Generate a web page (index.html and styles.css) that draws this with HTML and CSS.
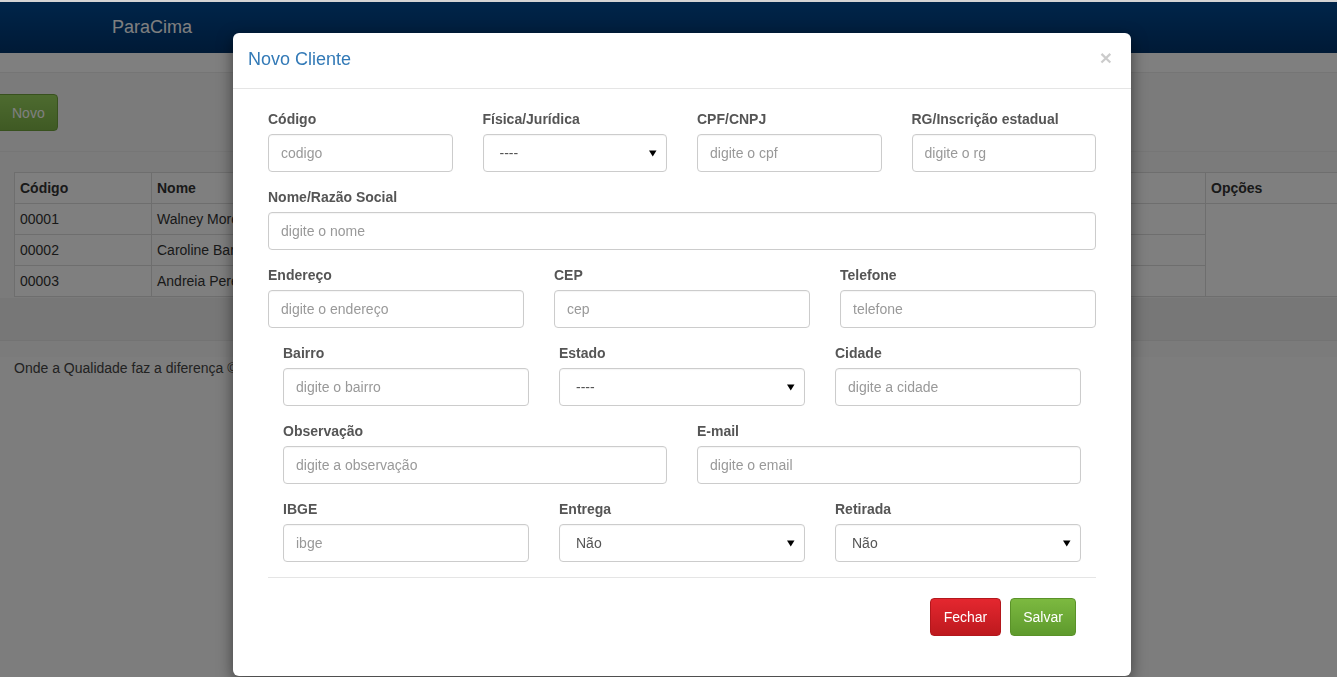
FILE: index.html
```html
<!DOCTYPE html>
<html lang="pt-BR">
<head>
<meta charset="utf-8">
<title>ParaCima - Clientes</title>
<link rel="stylesheet" href="styles.css">
</head>
<body>
<div class="topline"></div>
<header class="navbar">
  <span class="brand">ParaCima</span>
</header>
<div class="subbar"></div>
<main class="page">
  <div class="actions">
    <button class="btn btn-novo">Novo</button>
  </div>
  <table class="grid">
    <thead>
      <tr>
        <th class="c-cod">Código</th>
        <th class="c-nome">Nome</th>
        <th class="c-x">Telefone</th>
        <th class="c-x">Cidade</th>
        <th class="c-opt">Opções</th>
      </tr>
    </thead>
    <tbody>
      <tr><td>00001</td><td>Walney Moreira</td><td></td><td></td><td class="opt" rowspan="3"></td></tr>
      <tr><td>00002</td><td>Caroline Barbosa</td><td></td><td></td></tr>
      <tr><td>00003</td><td>Andreia Pereira</td><td></td><td></td></tr>
    </tbody>
  </table>
  <div class="gap-band"></div>
  <footer class="foot">Onde a Qualidade faz a diferença ©</footer>
</main>

<div class="backdrop"></div>

<div class="modal">
  <div class="modal-header">
    <h4 class="modal-title">Novo Cliente</h4>
    <button class="close" aria-label="Fechar">×</button>
  </div>
  <div class="modal-body">
    <div class="row r4">
      <div class="field"><label>Código</label><input class="ctl" placeholder="codigo"></div>
      <div class="field"><label>Física/Jurídica</label><select class="ctl sel"><option>----</option></select></div>
      <div class="field"><label>CPF/CNPJ</label><input class="ctl" placeholder="digite o cpf"></div>
      <div class="field"><label>RG/Inscrição estadual</label><input class="ctl" placeholder="digite o rg"></div>
    </div>
    <div class="row r1">
      <div class="field"><label>Nome/Razão Social</label><input class="ctl" placeholder="digite o nome"></div>
    </div>
    <div class="row r3">
      <div class="field"><label>Endereço</label><input class="ctl" placeholder="digite o endereço"></div>
      <div class="field"><label>CEP</label><input class="ctl" placeholder="cep"></div>
      <div class="field"><label>Telefone</label><input class="ctl" placeholder="telefone"></div>
    </div>
    <div class="row r3 inset">
      <div class="field"><label>Bairro</label><input class="ctl" placeholder="digite o bairro"></div>
      <div class="field"><label>Estado</label><select class="ctl sel"><option>----</option></select></div>
      <div class="field"><label>Cidade</label><input class="ctl" placeholder="digite a cidade"></div>
    </div>
    <div class="row r2 inset">
      <div class="field"><label>Observação</label><input class="ctl" placeholder="digite a observação"></div>
      <div class="field"><label>E-mail</label><input class="ctl" placeholder="digite o email"></div>
    </div>
    <div class="row r3 inset">
      <div class="field"><label>IBGE</label><input class="ctl" placeholder="ibge"></div>
      <div class="field"><label>Entrega</label><select class="ctl sel"><option>Não</option></select></div>
      <div class="field"><label>Retirada</label><select class="ctl sel"><option>Não</option></select></div>
    </div>
    <hr class="sep">
    <div class="footer-btns">
      <button class="btn btn-danger">Fechar</button>
      <button class="btn btn-success">Salvar</button>
    </div>
  </div>
</div>
</body>
</html>
```
FILE: styles.css
```css
* { box-sizing: border-box; }
html, body { margin: 0; padding: 0; }
body {
  font-family: "Liberation Sans", Arial, sans-serif;
  font-size: 14px;
  color: #333;
  background: #f6f6f6;
  overflow: hidden;
  height: 677px;
}
.topline { height: 2px; background: #d4d4d4; position: relative; z-index: 20; }
.navbar {
  height: 51px;
  background: linear-gradient(#004a94, #00346c);
  display: flex;
  align-items: center;
  padding-left: 112px;
}
.brand { color: #fff; font-size: 18px; }
.subbar { height: 20px; background: #fff; border-bottom: 1px solid #eaeaea; }
.page { padding: 0; }
.actions {
  padding: 21px 0 20px 0;
  border-bottom: 1px solid #ececec;
  margin-bottom: 20px;
}
.btn {
  font-family: "Liberation Sans", Arial, sans-serif;
  font-size: 14px;
  color: #fff;
  border: 1px solid transparent;
  border-radius: 4px;
  height: 38px;
  padding: 0 12px;
  cursor: pointer;
}
.btn-novo {
  margin-left: -4px;
  width: 62px;
  height: 37px;
  padding-left: 15px;
  text-align: left;
  background: linear-gradient(#9bd65f, #7fb448);
  border-color: #70a33c;
}
.grid {
  margin-left: 14px;
  width: 1324px;
  border-collapse: collapse;
  background: #fff;
}
.grid th, .grid td {
  border: 1px solid #ddd;
  height: 31px;
  padding: 0 5px;
  text-align: left;
  color: #333;
}
.grid th { font-weight: bold; }
.c-cod { width: 137px; }
.c-nome { width: 500px; }
.c-opt { width: 132px; }
.gap-band { height: 43px; background: #eee; border-bottom: 1px solid #e6e6e6; margin-top: 1px; }
.foot {
  background: #fafafa;
  margin-top: 16px;
  padding: 3px 14px 0;
  height: 320px;
  color: #444;
}
.backdrop {
  position: fixed;
  top: 2px; left: 0; right: 0; bottom: 0;
  background: rgba(0,0,0,0.5);
  z-index: 10;
}
.modal {
  position: absolute;
  top: 33px;
  left: 233px;
  width: 898px;
  height: 643px;
  background: #fff;
  border-radius: 6px;
  box-shadow: 0 5px 15px rgba(0,0,0,0.5);
  z-index: 30;
}
.modal-header {
  height: 56px;
  border-bottom: 1px solid #e5e5e5;
  display: flex;
  align-items: center;
  justify-content: space-between;
  padding: 0 15px;
}
.modal-title {
  margin: 0;
  font-size: 18px;
  font-weight: normal;
  color: #337ab7;
  line-height: 24px;
  padding-bottom: 3px;
}
.close {
  background: none;
  border: 0;
  padding: 0;
  font-family: "Liberation Sans", Arial, sans-serif;
  font-size: 21px;
  font-weight: bold;
  color: #000;
  opacity: 0.2;
  line-height: 1;
  margin-top: -6px;
  margin-right: 4px;
}
.modal-body { padding: 20px 35px 0; }
.row {
  display: grid;
  column-gap: 30px;
  margin-bottom: 15px;
}
.r4 { grid-template-columns: repeat(4, 1fr); }
.r3 { grid-template-columns: repeat(3, 1fr); }
.r2 { grid-template-columns: repeat(2, 1fr); }
.r1 { grid-template-columns: 1fr; }
.inset { padding: 0 15px; }
.field label {
  display: block;
  font-weight: bold;
  color: #555;
  line-height: 20px;
  margin-bottom: 5px;
}
.ctl {
  display: block;
  width: 100%;
  height: 38px;
  border: 1px solid #ccc;
  border-radius: 4px;
  padding: 0 12px;
  font-family: "Liberation Sans", Arial, sans-serif;
  font-size: 14px;
  color: #555;
  background: #fff;
  box-shadow: inset 0 1px 1px rgba(0,0,0,0.04);
}
.ctl::placeholder { color: #999; }
.sel {
  appearance: none;
  -webkit-appearance: none;
  padding-left: 16px;
  color: #555;
  background: #fff url("data:image/svg+xml;utf8,<svg xmlns='http://www.w3.org/2000/svg' width='8' height='8'><path d='M0 1.5h7.5L3.75 7.5z' fill='%23000'/></svg>") no-repeat right 9px center;
}
.sep {
  border: 0;
  border-top: 1px solid #e5e5e5;
  margin: 0 0 20px;
}
.footer-btns {
  display: flex;
  justify-content: flex-end;
  gap: 9px;
  padding-right: 20px;
}
.btn-danger {
  width: 71px;
  background: linear-gradient(#e4272f, #bd191e);
  border-color: #b3171c;
}
.btn-success {
  width: 66px;
  background: linear-gradient(#7cb940, #5e9a2d);
  border-color: #5a9229;
}
```
